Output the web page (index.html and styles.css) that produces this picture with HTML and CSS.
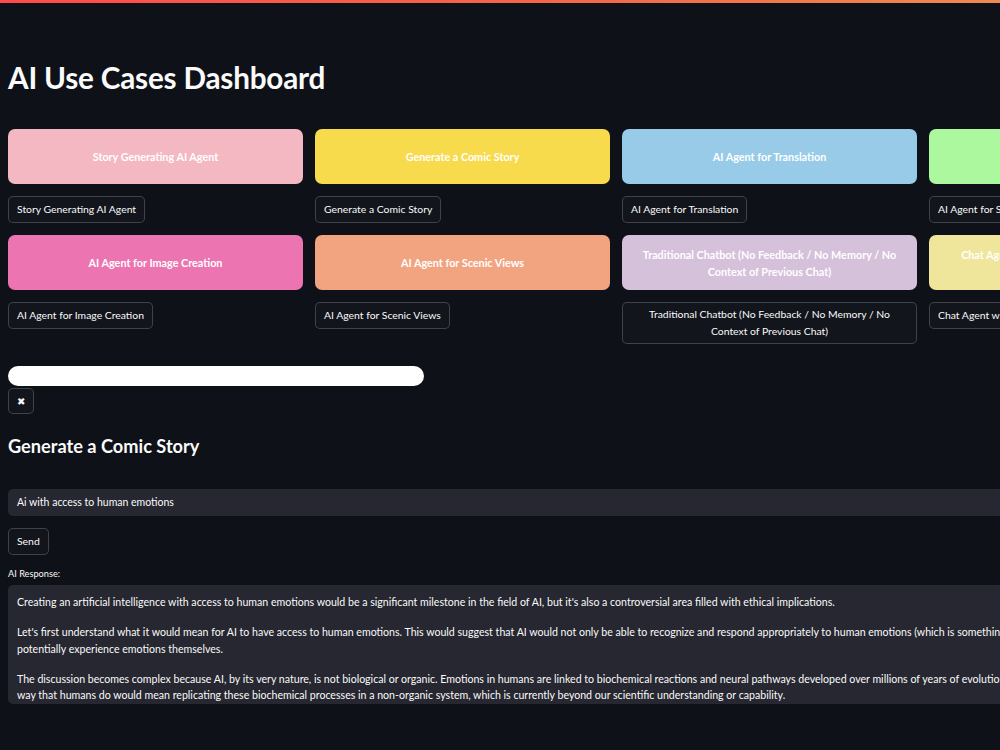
FILE: index.html
```html
<!DOCTYPE html>
<html>
<head>
<meta charset="utf-8">
<link rel="stylesheet" href="styles.css">
</head>
<body>
<div class="decoration"></div>
<main class="main">
  <h1 class="title">AI Use Cases Dashboard</h1>
  <div class="grid">
    <div class="cell">
      <div class="tile pink">Story Generating AI Agent</div>
      <button class="btn">Story Generating AI Agent</button>
    </div>
    <div class="cell">
      <div class="tile yellow">Generate a Comic Story</div>
      <button class="btn">Generate a Comic Story</button>
    </div>
    <div class="cell">
      <div class="tile blue">AI Agent for Translation</div>
      <button class="btn">AI Agent for Translation</button>
    </div>
    <div class="cell">
      <div class="tile green">AI Agent for Summarization</div>
      <button class="btn">AI Agent for Summarization</button>
    </div>
    <div class="cell">
      <div class="tile magenta">AI Agent for Image Creation</div>
      <button class="btn">AI Agent for Image Creation</button>
    </div>
    <div class="cell">
      <div class="tile salmon">AI Agent for Scenic Views</div>
      <button class="btn">AI Agent for Scenic Views</button>
    </div>
    <div class="cell">
      <div class="tile lavender">Traditional Chatbot (No Feedback / No Memory / No Context of Previous Chat)</div>
      <button class="btn btn-wide">Traditional Chatbot (No Feedback / No Memory / No Context of Previous Chat)</button>
    </div>
    <div class="cell">
      <div class="tile lemon">Chat Agent with Memory (Feedback / Memory /<br>Context of Previous Chat)</div>
      <button class="btn">Chat Agent with Memory</button>
    </div>
  </div>

  <div class="slider"></div>
  <button class="btn btn-close">&#10006;</button>

  <h3 class="subtitle">Generate a Comic Story</h3>

  <div class="input">Ai with access to human emotions</div>
  <button class="btn btn-send">Send</button>

  <div class="label">AI Response:</div>
  <div class="response">
    <p>Creating an artificial intelligence with access to human emotions would be a significant milestone in the field of AI, but it's also a controversial area filled with ethical implications.</p>
    <p>Let's first understand what it would mean for AI to have access to human emotions. This would suggest that AI would not only be able to recognize and respond appropriately to human emotions (which is something current AI can do to some extent), but also<br>potentially experience emotions themselves.</p>
    <p>The discussion becomes complex because AI, by its very nature, is not biological or organic. Emotions in humans are linked to biochemical reactions and neural pathways developed over millions of years of evolution. For AI to feel emotions the<br>way that humans do would mean replicating these biochemical processes in a non-organic system, which is currently beyond our scientific understanding or capability.</p>
    <p>Furthermore, there are many ethical questions to consider.</p>
  </div>
</main>
</body>
</html>
```

FILE: styles.css
```css
html, body {
  margin: 0;
  padding: 0;
  overflow: hidden;
  background: #0e1117;
}

body {
  width: 1000px;
  height: 750px;
  font-family: "Lato", "Liberation Sans", sans-serif;
  color: #fafafa;
}

.decoration {
  height: 3px;
  background: linear-gradient(90deg, #ff4b4b 0%, #f26a48 60%, #f08a50 100%);
}

.main {
  width: 1230px;
  padding: 0 0 0 8px;
  display: flex;
  flex-direction: column;
  align-items: flex-start;
}

.title {
  margin: 55px 0 0 0;
  height: 71px;
  font-size: 29.7px;
  font-weight: 700;
  line-height: 40px;
  letter-spacing: -0.2px;
}

.grid {
  display: grid;
  grid-template-columns: repeat(4, 295px);
  column-gap: 12px;
  row-gap: 12px;
  align-items: start;
}

.cell {
  display: flex;
  flex-direction: column;
  align-items: flex-start;
  gap: 12px;
}

.tile {
  box-sizing: border-box;
  width: 295px;
  height: 55px;
  border-radius: 7px;
  display: flex;
  align-items: center;
  justify-content: center;
  text-align: center;
  padding: 0 16px;
  font-size: 10.8px;
  font-weight: 700;
  line-height: 17px;
  color: #ffffff;
}

.pink { background: #f4b8c2; }
.yellow { background: #f8da4d; }
.blue { background: #97cbe7; }
.green { background: #abf89e; }
.magenta { background: #ec74b1; }
.salmon { background: #f2a481; }
.lavender { background: #d6c1db; }
.lemon { background: #efe69b; }

.btn {
  box-sizing: border-box;
  min-height: 27px;
  padding: 4px 8px;
  border: 1px solid rgba(250, 250, 250, 0.2);
  border-radius: 5px;
  background: #12151c;
  color: #fafafa;
  font-family: inherit;
  font-size: 10.4px;
  line-height: 17px;
  text-align: center;
  white-space: nowrap;
}

.btn-wide {
  width: 295px;
  white-space: normal;
  padding: 3px 20px;
}

.slider {
  margin-top: 22px;
  width: 416px;
  height: 20px;
  border-radius: 10px;
  background: #ffffff;
}

.btn-close {
  margin-top: 2px;
  width: 26px;
  height: 26px;
  min-height: 0;
  padding: 0;
  font-size: 10px;
  line-height: 24px;
}

.subtitle {
  margin: 19px 0 0 0;
  font-size: 18.2px;
  font-weight: 700;
  line-height: 26px;
}

.input {
  box-sizing: border-box;
  margin-top: 30px;
  width: 1200px;
  height: 27px;
  padding: 0 9px;
  border-radius: 5px;
  background: #262730;
  font-size: 10.5px;
  line-height: 27px;
}

.btn-send {
  margin-top: 12px;
  height: 27px;
}

.label {
  margin-top: 12px;
  font-size: 9.2px;
  line-height: 14px;
}

.response {
  box-sizing: border-box;
  margin-top: 4px;
  width: 1200px;
  height: 119px;
  overflow: hidden;
  padding: 9px 9px;
  border-radius: 5px;
  background: #262730;
  font-size: 10.6px;
  line-height: 16.5px;
  white-space: nowrap;
}

.response p {
  margin: 0 0 13.5px 0;
}
```
